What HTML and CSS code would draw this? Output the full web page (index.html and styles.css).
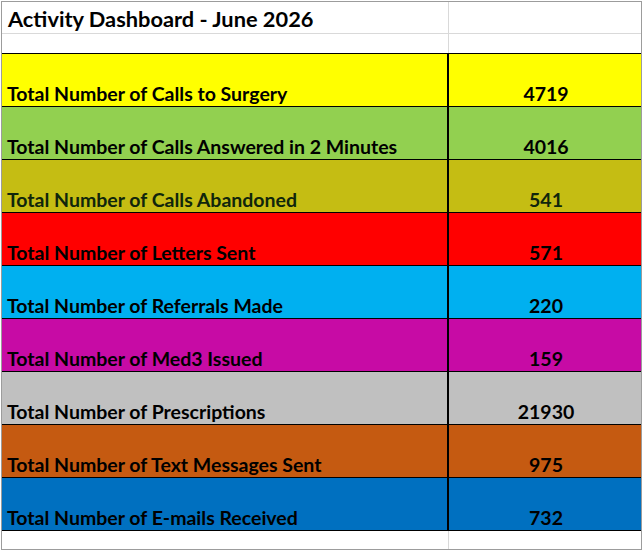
FILE: index.html
```html
<!DOCTYPE html>
<html>
<head>
<meta charset="utf-8">
<title>Activity Dashboard - June 2026</title>
<link rel="stylesheet" href="styles.css">
</head>
<body>
<div class="sheet">
  <div class="row head">
    <div class="cell lab title">Activity Dashboard - June 2026</div>
    <div class="cell val"></div>
  </div>
  <div class="row blank">
    <div class="cell lab"></div>
    <div class="cell val"></div>
  </div>
  <div class="row stat yellow">
    <div class="cell lab">Total Number of Calls to Surgery</div>
    <div class="cell val">4719</div>
  </div>
  <div class="row stat green">
    <div class="cell lab">Total Number of Calls Answered in 2 Minutes</div>
    <div class="cell val">4016</div>
  </div>
  <div class="row stat olive">
    <div class="cell lab">Total Number of Calls Abandoned</div>
    <div class="cell val">541</div>
  </div>
  <div class="row stat red">
    <div class="cell lab">Total Number of Letters Sent</div>
    <div class="cell val">571</div>
  </div>
  <div class="row stat sky">
    <div class="cell lab">Total Number of Referrals Made</div>
    <div class="cell val">220</div>
  </div>
  <div class="row stat magenta">
    <div class="cell lab">Total Number of Med3 Issued</div>
    <div class="cell val">159</div>
  </div>
  <div class="row stat grey">
    <div class="cell lab">Total Number of Prescriptions</div>
    <div class="cell val">21930</div>
  </div>
  <div class="row stat orange">
    <div class="cell lab">Total Number of Text Messages Sent</div>
    <div class="cell val">975</div>
  </div>
  <div class="row stat blue">
    <div class="cell lab">Total Number of E-mails Received</div>
    <div class="cell val">732</div>
  </div>
  <div class="row tail">
    <div class="cell lab"></div>
    <div class="cell val"></div>
  </div>
</div>
</body>
</html>
```
FILE: styles.css
```css
html, body {
  margin: 0;
  padding: 0;
  background: #ffffff;
}

.sheet {
  box-sizing: border-box;
  margin: 1px 0 0 1px;
  width: 641px;
  height: 549px;
  border: 1px solid #9c9c9c;
  display: flex;
  flex-direction: column;
  font-family: Lato, "Open Sans", sans-serif;
  font-weight: bold;
  color: #000;
}

.row {
  display: grid;
  grid-template-columns: 447px 1fr;
}

.cell {
  box-sizing: border-box;
  display: flex;
  align-items: flex-end;
}

.head {
  height: 32px;
  border-bottom: 1px solid #d9d9d9;
  box-sizing: border-box;
}

.blank {
  height: 19px;
}

.head .lab,
.blank .lab,
.tail .lab {
  border-right: 1px solid #d9d9d9;
}

.title {
  font-size: 21.8px;
  line-height: 26px;
  padding: 0 0 1px 6px;
}

.stat {
  height: 53px;
  border-top: 1px solid #000;
  box-sizing: border-box;
  font-size: 19.5px;
  line-height: 20px;
}

.stat .lab {
  border-right: 2px solid #000;
  padding: 0 0 2px 5px;
}

.stat .val {
  justify-content: center;
  padding: 0 0 2px 2px;
}

.tail {
  flex: 1;
  border-top: 1px solid #000;
}

.yellow { background: #ffff00; }
.green { background: #92d050; }
.olive { background: #c5bd13; color: #10260c; }
.red { background: #ff0000; }
.sky { background: #00b0f0; }
.magenta { background: #c70ba5; }
.grey { background: #c0c0c0; }
.orange { background: #c55a11; }
.blue { background: #0070c0; }
```
